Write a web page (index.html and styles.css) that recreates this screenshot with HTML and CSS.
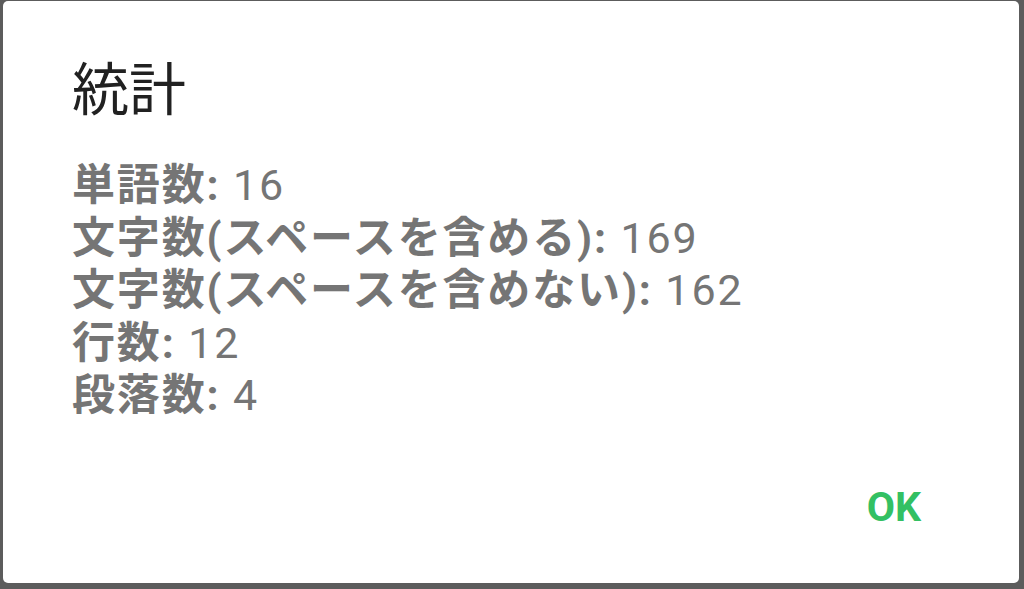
FILE: index.html
```html
<!DOCTYPE html>
<html lang="ja">
<head>
<meta charset="utf-8">
<link rel="stylesheet" href="styles.css">
</head>
<body>
<div class="dialog">
  <h1 class="title">統計</h1>
  <div class="stats">
    <div class="row"><b>単語数:</b> 16</div>
    <div class="row"><b>文字数(スペースを含める):</b> 169</div>
    <div class="row"><b>文字数(スペースを含めない):</b> 162</div>
    <div class="row"><b>行数:</b> 12</div>
    <div class="row"><b>段落数:</b> 4</div>
  </div>
  <div class="actions">
    <button class="ok">OK</button>
  </div>
</div>
</body>
</html>
```
FILE: styles.css
```css
html, body {
  margin: 0;
  padding: 0;
  height: 100%;
}
body {
  background: #5c5c5c;
  font-family: Roboto, "Noto Sans CJK JP", sans-serif;
  overflow: hidden;
}
.dialog {
  box-sizing: border-box;
  margin: 1px 5px 0 3px;
  height: 582px;
  background: #ffffff;
  border-radius: 5px;
  padding: 58px 69px 0 69px;
  display: flex;
  flex-direction: column;
}
.title {
  margin: 0;
  font-size: 57px;
  line-height: 64px;
  font-weight: 400;
  color: #212121;
}
.stats {
  margin-top: 36px;
  font-size: 43px;
  line-height: 52.5px;
  letter-spacing: 1.85px;
  color: #757575;
}
.row b {
  font-weight: 700;
}
.actions {
  margin-top: auto;
  display: flex;
  justify-content: flex-end;
  padding-bottom: 52px;
}
.ok {
  border: none;
  background: transparent;
  font-family: Roboto, sans-serif;
  font-weight: 700;
  font-size: 41px;
  line-height: 48px;
  color: #33c063;
  padding: 0;
  margin-right: 29px;
}
```
